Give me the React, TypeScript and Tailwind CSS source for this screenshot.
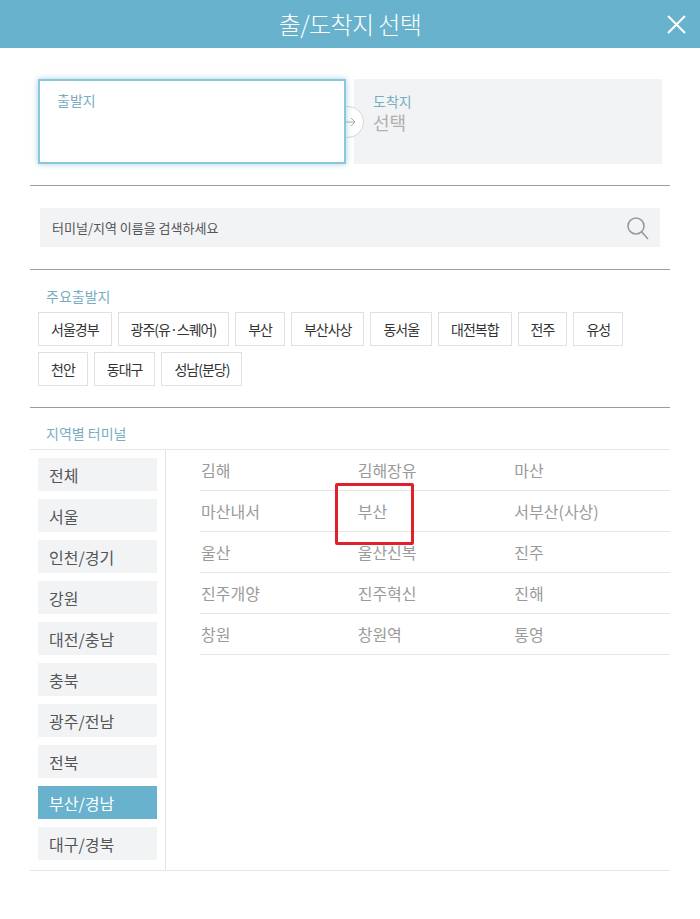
import React from 'react';

const FONT = '"Noto Sans CJK KR", "Noto Sans", sans-serif';

const majors = [
  ['서울경부', '광주(유·스퀘어)', '부산', '부산사상', '동서울', '대전복합', '전주', '유성'],
  ['천안', '동대구', '성남(분당)'],
];

const regions = ['전체', '서울', '인천/경기', '강원', '대전/충남', '충북', '광주/전남', '전북', '부산/경남', '대구/경북'];

const terminals = [
  ['김해', '김해장유', '마산'],
  ['마산내서', '부산', '서부산(사상)'],
  ['울산', '울산신복', '진주'],
  ['진주개양', '진주혁신', '진해'],
  ['창원', '창원역', '통영'],
];

export default function App() {
  return (
    <div className="w-[700px] h-[919px] bg-white" style={{ fontFamily: FONT }}>
      <header className="relative h-12 bg-[#69b2cd] flex items-center justify-center">
        <h1 className="text-[24px] text-white font-light tracking-tight">출/도착지 선택</h1>
        <button className="absolute right-[14px] top-[15px] w-[19px] h-[19px]" aria-label="닫기">
          <svg viewBox="0 0 19 19" className="w-full h-full" fill="none" stroke="#fff" strokeWidth="2">
            <path d="M1 1 L18 18 M18 1 L1 18" />
          </svg>
        </button>
      </header>

      <div className="px-[30px]">
        {/* departure / arrival */}
        <div className="pt-[31px] pb-[21px] px-2 flex gap-2 relative">
          <div className="relative z-10 w-[308px] h-[85px] border-2 border-[#8ac6dc] bg-white shadow-[0_0_6px_rgba(105,178,205,0.6)] px-[17px] pt-[9px]">
            <span className="block text-[14px] leading-[20px] text-[#78adbf]">출발지</span>
          </div>
          <div className="w-[308px] h-[85px] bg-[#f2f3f5] px-[19px] pt-[12px] flex flex-col">
            <span className="text-[14px] leading-[20px] text-[#78adbf]">도착지</span>
            <span className="text-[18px] leading-[22px] text-[#b0b0b0]">선택</span>
          </div>
          <div className="absolute left-[302px] top-[58px] w-[32px] h-[32px] rounded-full bg-white border border-[#d8d8d8] flex items-center justify-center">
            <svg viewBox="0 0 12 10" className="w-[12px] h-[10px] ml-[4px]" fill="none" stroke="#aaa" strokeWidth="1">
              <path d="M0 5 H11 M7 1 L11 5 L7 9" />
            </svg>
          </div>
        </div>

        <div className="border-t border-[#9c9c9c]" />

        {/* search */}
        <div className="px-[10px] py-[22px]">
          <div className="h-[39px] bg-[#f2f3f5] flex items-center justify-between pl-[12px] pr-[10px]">
            <span className="text-[13px] text-[#555]">터미널/지역 이름을 검색하세요</span>
            <svg viewBox="0 0 24 24" className="w-[24px] h-[24px]" fill="none" stroke="#9a9a9a" strokeWidth="1.6">
              <circle cx="10" cy="10" r="8" />
              <path d="M15.8 16 L22 23" />
            </svg>
          </div>
        </div>

        <div className="border-t border-[#9c9c9c]" />

        {/* major departures */}
        <div className="pt-[16px] pb-[21px] px-2">
          <p className="pl-2 text-[14px] leading-[20px] text-[#78adbf] mb-[6px]">주요출발지</p>
          <div className="flex flex-col gap-[6px]">
            {majors.map((row, i) => (
              <div key={i} className="flex gap-[6px]">
                {row.map(name => (
                  <span
                    key={name}
                    className="shrink-0 whitespace-nowrap h-[34px] px-[12px] border border-[#e0e0e0] flex items-center text-[14px] tracking-[-1px] text-[#333]"
                  >
                    {name}
                  </span>
                ))}
              </div>
            ))}
          </div>
        </div>

        <div className="border-t border-[#9c9c9c]" />

        {/* terminals by region */}
        <p className="pl-4 pt-[15px] pb-[6px] text-[14px] leading-[20px] text-[#78adbf] border-b border-[#e5e5e5]">지역별 터미널</p>
        <div className="flex border-b border-[#e5e5e5]">
          <ul className="w-[136px] border-r border-[#e5e5e5] pl-2 pr-2 pt-[8px] pb-[10px] flex flex-col gap-2">
            {regions.map(r => (
              <li
                key={r}
                className={
                  r === '부산/경남'
                    ? 'h-[33px] bg-[#69b2cd] text-white text-[16px] flex items-center pl-[11px]'
                    : 'h-[33px] bg-[#f2f3f5] text-[#555] text-[16px] flex items-center pl-[11px]'
                }
              >
                {r}
              </li>
            ))}
          </ul>
          <div className="relative flex-1 pl-[34px]">
            {terminals.map((row, i) => (
              <div key={i} className="grid grid-cols-3 h-[41px] border-b border-[#e5e5e5]">
                {row.map(t => (
                  <span key={t} className="flex items-center pl-px text-[16px] text-[#9a9a9a]">
                    {t}
                  </span>
                ))}
              </div>
            ))}
            <div className="absolute left-[169px] top-[33px] w-[79px] h-[62px] border-[3px] border-[#e0202a] rounded-[2px]" />
          </div>
        </div>
      </div>
    </div>
  );
}
